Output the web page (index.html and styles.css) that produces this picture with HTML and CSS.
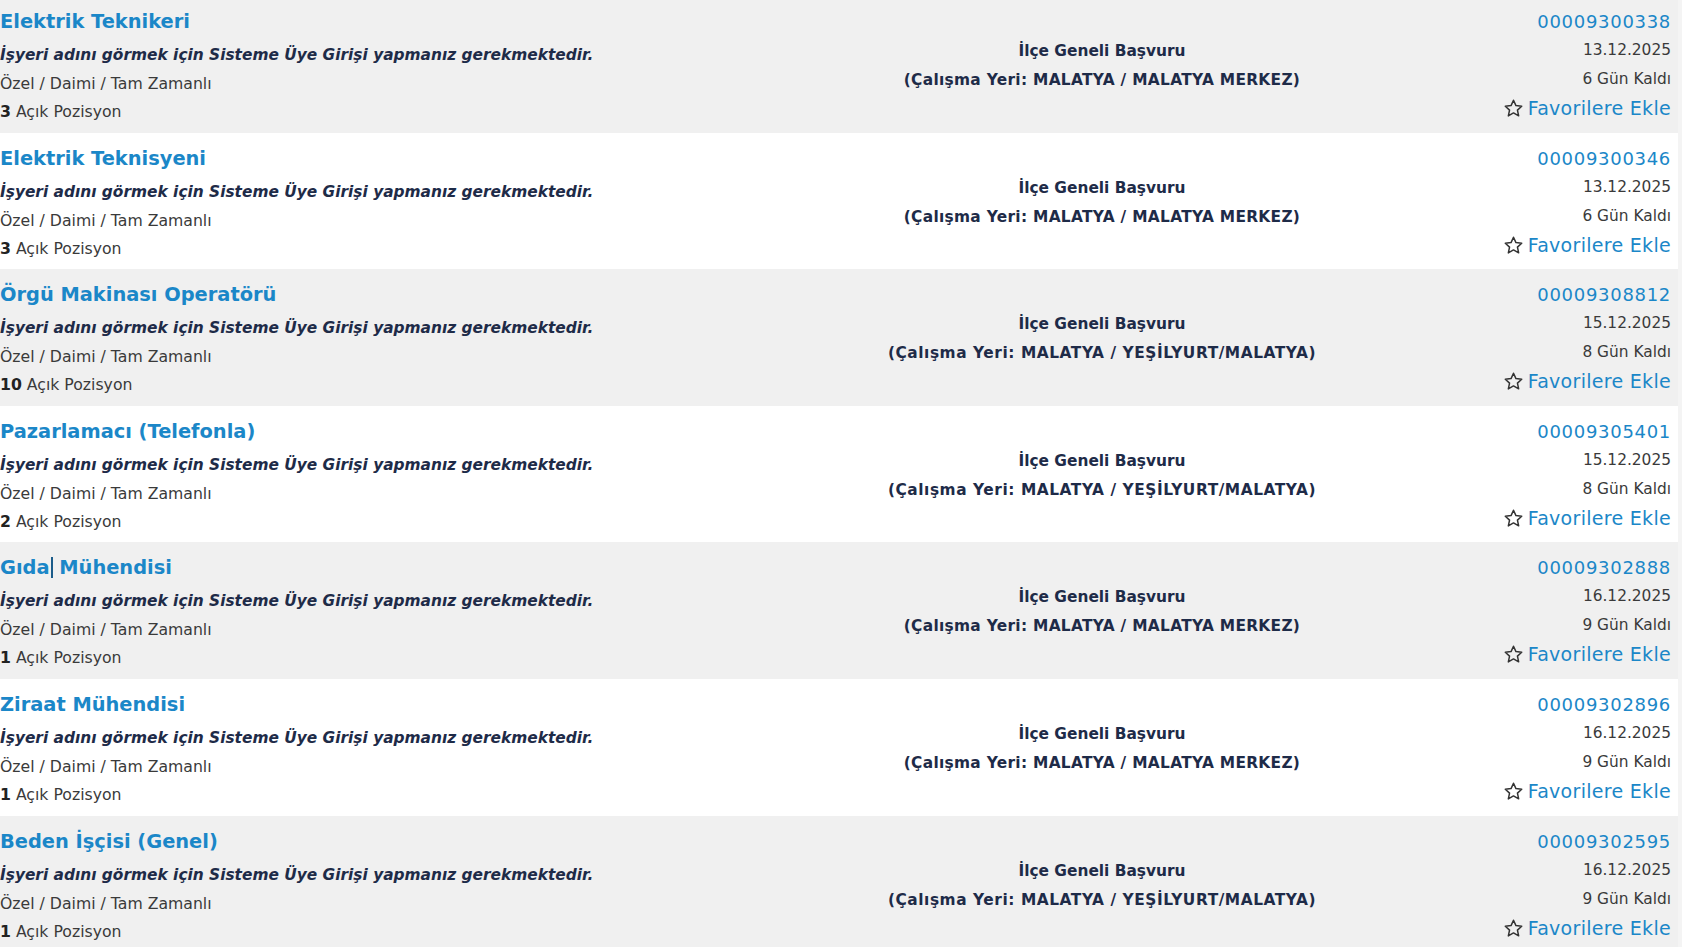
FILE: index.html
```html
<!DOCTYPE html>
<html lang="tr">
<head>
<meta charset="utf-8">
<title>İlanlar</title>
<link rel="stylesheet" href="styles.css">
</head>
<body>
<div class="list">

  <div class="row alt">
    <div class="col-left">
      <a class="title">Elektrik Teknikeri</a>
      <div class="notice">İşyeri adını görmek için Sisteme Üye Girişi yapmanız gerekmektedir.</div>
      <div class="meta">Özel / Daimi / Tam Zamanlı</div>
      <div class="meta"><b>3</b> Açık Pozisyon</div>
    </div>
    <div class="col-mid">
      <div class="mid-line">İlçe Geneli Başvuru</div>
      <div class="mid-line wide">(Çalışma Yeri: MALATYA / MALATYA MERKEZ)</div>
    </div>
    <div class="col-right">
      <a class="code">00009300338</a>
      <div class="info">13.12.2025</div>
      <div class="info">6 Gün Kaldı</div>
      <a class="fav"><svg class="star" viewBox="0 0 24 24"><path d="M12 2.6l2.8 6.1 6.6.7-4.9 4.5 1.4 6.5L12 17.1l-5.9 3.3 1.4-6.5-4.9-4.5 6.6-.7z"/></svg>Favorilere Ekle</a>
    </div>
  </div>

  <div class="row">
    <div class="col-left">
      <a class="title">Elektrik Teknisyeni</a>
      <div class="notice">İşyeri adını görmek için Sisteme Üye Girişi yapmanız gerekmektedir.</div>
      <div class="meta">Özel / Daimi / Tam Zamanlı</div>
      <div class="meta"><b>3</b> Açık Pozisyon</div>
    </div>
    <div class="col-mid">
      <div class="mid-line">İlçe Geneli Başvuru</div>
      <div class="mid-line wide">(Çalışma Yeri: MALATYA / MALATYA MERKEZ)</div>
    </div>
    <div class="col-right">
      <a class="code">00009300346</a>
      <div class="info">13.12.2025</div>
      <div class="info">6 Gün Kaldı</div>
      <a class="fav"><svg class="star" viewBox="0 0 24 24"><path d="M12 2.6l2.8 6.1 6.6.7-4.9 4.5 1.4 6.5L12 17.1l-5.9 3.3 1.4-6.5-4.9-4.5 6.6-.7z"/></svg>Favorilere Ekle</a>
    </div>
  </div>

  <div class="row alt">
    <div class="col-left">
      <a class="title">Örgü Makinası Operatörü</a>
      <div class="notice">İşyeri adını görmek için Sisteme Üye Girişi yapmanız gerekmektedir.</div>
      <div class="meta">Özel / Daimi / Tam Zamanlı</div>
      <div class="meta"><b>10</b> Açık Pozisyon</div>
    </div>
    <div class="col-mid">
      <div class="mid-line">İlçe Geneli Başvuru</div>
      <div class="mid-line wider">(Çalışma Yeri: MALATYA / YEŞİLYURT/MALATYA)</div>
    </div>
    <div class="col-right">
      <a class="code">00009308812</a>
      <div class="info">15.12.2025</div>
      <div class="info">8 Gün Kaldı</div>
      <a class="fav"><svg class="star" viewBox="0 0 24 24"><path d="M12 2.6l2.8 6.1 6.6.7-4.9 4.5 1.4 6.5L12 17.1l-5.9 3.3 1.4-6.5-4.9-4.5 6.6-.7z"/></svg>Favorilere Ekle</a>
    </div>
  </div>

  <div class="row">
    <div class="col-left">
      <a class="title">Pazarlamacı (Telefonla)</a>
      <div class="notice">İşyeri adını görmek için Sisteme Üye Girişi yapmanız gerekmektedir.</div>
      <div class="meta">Özel / Daimi / Tam Zamanlı</div>
      <div class="meta"><b>2</b> Açık Pozisyon</div>
    </div>
    <div class="col-mid">
      <div class="mid-line">İlçe Geneli Başvuru</div>
      <div class="mid-line wider">(Çalışma Yeri: MALATYA / YEŞİLYURT/MALATYA)</div>
    </div>
    <div class="col-right">
      <a class="code">00009305401</a>
      <div class="info">15.12.2025</div>
      <div class="info">8 Gün Kaldı</div>
      <a class="fav"><svg class="star" viewBox="0 0 24 24"><path d="M12 2.6l2.8 6.1 6.6.7-4.9 4.5 1.4 6.5L12 17.1l-5.9 3.3 1.4-6.5-4.9-4.5 6.6-.7z"/></svg>Favorilere Ekle</a>
    </div>
  </div>

  <div class="row alt">
    <div class="col-left">
      <a class="title">Gıda<span class="caret"></span> Mühendisi</a>
      <div class="notice">İşyeri adını görmek için Sisteme Üye Girişi yapmanız gerekmektedir.</div>
      <div class="meta">Özel / Daimi / Tam Zamanlı</div>
      <div class="meta"><b>1</b> Açık Pozisyon</div>
    </div>
    <div class="col-mid">
      <div class="mid-line">İlçe Geneli Başvuru</div>
      <div class="mid-line wide">(Çalışma Yeri: MALATYA / MALATYA MERKEZ)</div>
    </div>
    <div class="col-right">
      <a class="code">00009302888</a>
      <div class="info">16.12.2025</div>
      <div class="info">9 Gün Kaldı</div>
      <a class="fav"><svg class="star" viewBox="0 0 24 24"><path d="M12 2.6l2.8 6.1 6.6.7-4.9 4.5 1.4 6.5L12 17.1l-5.9 3.3 1.4-6.5-4.9-4.5 6.6-.7z"/></svg>Favorilere Ekle</a>
    </div>
  </div>

  <div class="row">
    <div class="col-left">
      <a class="title">Ziraat Mühendisi</a>
      <div class="notice">İşyeri adını görmek için Sisteme Üye Girişi yapmanız gerekmektedir.</div>
      <div class="meta">Özel / Daimi / Tam Zamanlı</div>
      <div class="meta"><b>1</b> Açık Pozisyon</div>
    </div>
    <div class="col-mid">
      <div class="mid-line">İlçe Geneli Başvuru</div>
      <div class="mid-line wide">(Çalışma Yeri: MALATYA / MALATYA MERKEZ)</div>
    </div>
    <div class="col-right">
      <a class="code">00009302896</a>
      <div class="info">16.12.2025</div>
      <div class="info">9 Gün Kaldı</div>
      <a class="fav"><svg class="star" viewBox="0 0 24 24"><path d="M12 2.6l2.8 6.1 6.6.7-4.9 4.5 1.4 6.5L12 17.1l-5.9 3.3 1.4-6.5-4.9-4.5 6.6-.7z"/></svg>Favorilere Ekle</a>
    </div>
  </div>

  <div class="row alt">
    <div class="col-left">
      <a class="title">Beden İşçisi (Genel)</a>
      <div class="notice">İşyeri adını görmek için Sisteme Üye Girişi yapmanız gerekmektedir.</div>
      <div class="meta">Özel / Daimi / Tam Zamanlı</div>
      <div class="meta"><b>1</b> Açık Pozisyon</div>
    </div>
    <div class="col-mid">
      <div class="mid-line">İlçe Geneli Başvuru</div>
      <div class="mid-line wider">(Çalışma Yeri: MALATYA / YEŞİLYURT/MALATYA)</div>
    </div>
    <div class="col-right">
      <a class="code">00009302595</a>
      <div class="info">16.12.2025</div>
      <div class="info">9 Gün Kaldı</div>
      <a class="fav"><svg class="star" viewBox="0 0 24 24"><path d="M12 2.6l2.8 6.1 6.6.7-4.9 4.5 1.4 6.5L12 17.1l-5.9 3.3 1.4-6.5-4.9-4.5 6.6-.7z"/></svg>Favorilere Ekle</a>
    </div>
  </div>

</div>
</body>
</html>
```

FILE: styles.css
```css
html, body {
  margin: 0;
  padding: 0;
}

body {
  background: #f4f4f4;
  font-family: "DejaVu Sans", Verdana, sans-serif;
  color: #383838;
  overflow: hidden;
}

.list {
  width: 1678px;
  margin-top: -4px;
}

.row {
  display: grid;
  grid-template-columns: 852px 500px 1fr;
  height: 136.6px;
  box-sizing: border-box;
  padding: 11px 7px 0 0;
  background: #ffffff;
}

.row.alt {
  background: #f0f0f0;
}

.col-left,
.col-right {
  display: flex;
  flex-direction: column;
}

.col-left {
  white-space: nowrap;
}

.col-right {
  align-items: flex-end;
}

.title {
  display: block;
  font-size: 19.4px;
  font-weight: bold;
  line-height: 29px;
  margin-bottom: 5px;
  color: #1b87c8;
}

.caret {
  display: inline-block;
  width: 2px;
  height: 21px;
  background: #1b5c8a;
  vertical-align: -4px;
  margin-left: 1px;
}

.notice {
  font-size: 15.4px;
  font-weight: bold;
  font-style: italic;
  line-height: 29px;
  color: #1e2b48;
}

.meta {
  font-size: 15.7px;
  line-height: 28px;
  color: #3a3a3a;
}

.meta b {
  color: #222;
}

.info {
  font-size: 15.4px;
  line-height: 29px;
  color: #3a3a3a;
}

.col-mid {
  padding-top: 30px;
  text-align: center;
}

.mid-line {
  font-size: 15.4px;
  font-weight: bold;
  line-height: 29px;
  color: #1e2b48;
  white-space: nowrap;
}

.mid-line.wide {
  letter-spacing: 0.3px;
}

.mid-line.wider {
  letter-spacing: 0.55px;
}

.code {
  font-size: 18px;
  letter-spacing: 0.7px;
  line-height: 29px;
  color: #1b87c8;
}

.fav {
  display: flex;
  align-items: center;
  font-size: 19px;
  letter-spacing: 0.3px;
  line-height: 29px;
  color: #1b87c8;
}

.star {
  width: 21px;
  height: 21px;
  margin-right: 4px;
  fill: none;
  stroke: #333;
  stroke-width: 1.7;
  stroke-linejoin: round;
}
```
